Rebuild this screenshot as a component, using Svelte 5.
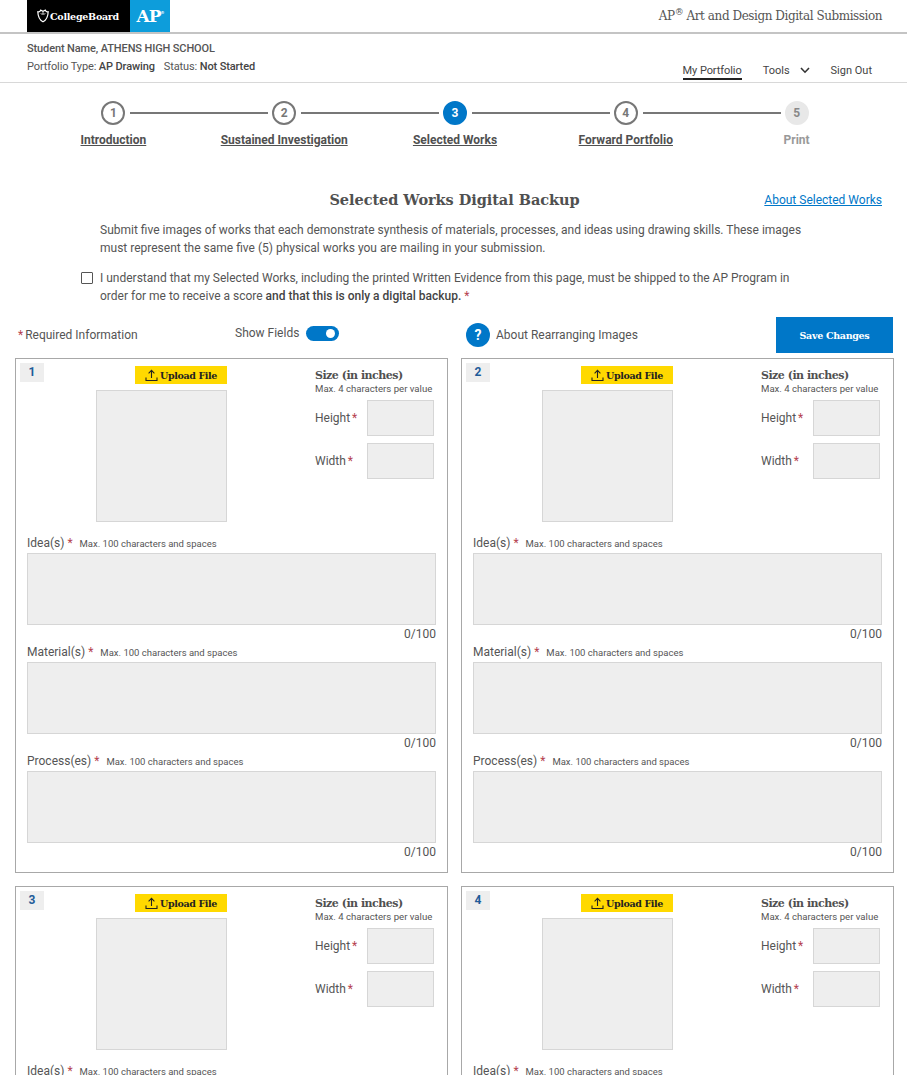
<script>
  const steps = [
    { n: 1, label: 'Introduction' },
    { n: 2, label: 'Sustained Investigation' },
    { n: 3, label: 'Selected Works', active: true },
    { n: 4, label: 'Forward Portfolio' },
    { n: 5, label: 'Print', off: true }
  ];
  const fields = ['Idea(s)', 'Material(s)', 'Process(es)'];
</script>

<div class="page">
  <header class="top">
    <div class="logos">
      <div class="cb">
        <svg width="12" height="14" viewBox="0 0 15 17" aria-hidden="true"><path d="M1 3.2 C3 3.8 4 2.6 4.6 1.2 L7.5 2.6 L10.4 1.2 C11 2.6 12 3.8 14 3.2 C13.8 9 12 13.4 7.5 15.8 C3 13.4 1.2 9 1 3.2 Z" fill="none" stroke="#fff" stroke-width="1.5"/><path d="M7.5 3 L7.5 6 M4.5 5.5 C6 6.5 9 6.5 10.5 5.5" stroke="#fff" fill="none" stroke-width="1"/></svg>
        <span>CollegeBoard</span>
      </div>
      <div class="ap">AP<sup>®</sup></div>
    </div>
    <div class="apptitle">AP<sup>®</sup> Art and Design Digital Submission</div>
  </header>

  <section class="info">
    <div class="student">
      <div class="name">Student Name, ATHENS HIGH SCHOOL</div>
      <div class="meta">Portfolio Type: <b>AP Drawing</b><span class="status">Status: <b>Not Started</b></span></div>
    </div>
    <nav class="nav">
      <span class="current">My Portfolio</span>
      <span class="tools">Tools
        <svg width="10" height="7" viewBox="0 0 10 7" aria-hidden="true"><path d="M1 1 L5 5.2 L9 1" fill="none" stroke="#333" stroke-width="1.6"/></svg>
      </span>
      <span>Sign Out</span>
    </nav>
  </section>

  <ol class="stepper">
    {#each steps as s, i}
      <li class="step" class:active={s.active} class:off={s.off} class:joined={i < steps.length - 1}>
        <span class="dot">{s.n}</span>
        <span class="lbl">{s.label}</span>
      </li>
    {/each}
  </ol>

  <div class="headrow">
    <h1>Selected Works Digital Backup</h1>
    <a class="about" href="#about">About Selected Works</a>
  </div>

  <p class="intro">Submit five images of works that each demonstrate synthesis of materials, processes, and ideas using drawing skills. These images must represent the same five (5) physical works you are mailing in your submission.</p>

  <div class="agree">
    <span class="check"></span>
    <p>I understand that my Selected Works, including the printed Written Evidence from this page, must be shipped to the AP Program in order for me to receive a score <b>and that this is only a digital backup.</b> <i>*</i></p>
  </div>

  <div class="toolbar">
    <div class="req"><i>*</i>Required Information</div>
    <div class="show">Show Fields <span class="toggle"></span></div>
    <div class="rearr"><span class="q">?</span>About Rearranging Images</div>
    <button class="save">Save Changes</button>
  </div>

  <div class="cards">
    {#each [1, 2, 3, 4] as n}
      <article class="card">
        <div class="upper">
          <span class="badge">{n}</span>
          <div class="media">
            <button class="upload">
              <svg width="13" height="13" viewBox="0 0 13 13" aria-hidden="true"><path d="M6.5 9 V1.6 M3.6 4.3 L6.5 1.4 L9.4 4.3 M1 8.5 V11.5 H12 V8.5" fill="none" stroke="#222" stroke-width="1.1"/></svg>
              Upload File
            </button>
            <div class="image"></div>
          </div>
          <div class="size">
            <h2>Size (in inches)</h2>
            <div class="hint">Max. 4 characters per value</div>
            <label class="dim"><span>Height <i>*</i></span><input aria-label="Height" /></label>
            <label class="dim"><span>Width <i>*</i></span><input aria-label="Width" /></label>
          </div>
        </div>
        {#each fields as f}
          <div class="field">
            <div class="flabel"><span>{f} <i>*</i></span><small>Max. 100 characters and spaces</small></div>
            <textarea aria-label={f}></textarea>
            <div class="count">0/100</div>
          </div>
        {/each}
      </article>
    {/each}
  </div>
</div>

<style>
  :global(body) { margin: 0; background: #fff; }
  .page { height: 1075px; overflow: hidden; font-family: Roboto, "Liberation Sans", sans-serif; color: #555; font-size: 12px; }
  i { font-style: normal; color: #b5424f; }

  .top { height: 32px; display: flex; justify-content: space-between; align-items: center; border-bottom: 2px solid #c4c4c4; padding: 0 25px 0 27px; }
  .logos { display: flex; height: 32px; }
  .cb { width: 103px; background: #000; color: #fff; display: flex; align-items: center; gap: 1px; padding-left: 10px; box-sizing: border-box; font: 700 9.5px "DejaVu Serif", serif; letter-spacing: -0.25px; }
  .ap { width: 40px; background: #0d9ddb; color: #fff; font: 700 17px "DejaVu Serif", serif; display: flex; align-items: center; justify-content: center; letter-spacing: -1px; }
  .ap sup { font-size: 4px; margin-bottom: 8px; }
  .apptitle { font: 400 12px "DejaVu Serif", serif; color: #555; letter-spacing: -0.44px; }
  .apptitle sup { font-size: 9px; line-height: 0; }

  .info { height: 48px; display: flex; justify-content: space-between; border-bottom: 1px solid #d8d8d8; padding: 0 35px 0 27px; }
  .student { padding-top: 6px; font-size: 11px; line-height: 18px; letter-spacing: -0.12px; }
  .name { font-weight: 500; }
  .meta b { font-weight: 500; color: #444; }
  .status { margin-left: 9px; }
  .nav { display: flex; gap: 23px; align-items: flex-end; font-size: 11px; padding-bottom: 2px; color: #444; }
  .nav span { line-height: 15px; padding-bottom: 0; }
  .nav .current { border-bottom: 2px solid #222; letter-spacing: -0.08px; margin-right: -2px; padding-bottom: 0; }
  .tools { display: inline-flex; align-items: center; gap: 10px; margin-right: -2px; }
  .nav > span:not(.current) { margin-bottom: 2px; }

  .stepper { list-style: none; margin: 0 0 0 28px; padding: 18px 0 0; display: grid; grid-template-columns: repeat(5, 170.8px); }
  .step { position: relative; display: flex; flex-direction: column; align-items: center; gap: 7px; }
  .joined::after { content: ""; position: absolute; left: calc(50% + 17px); top: 11px; width: 138px; height: 2px; background: #777; }
  .dot { width: 24px; height: 24px; box-sizing: border-box; border: 2px solid #777; border-radius: 50%; display: flex; align-items: center; justify-content: center; font-size: 12px; font-weight: 700; color: #777; }
  .lbl { font-size: 12px; font-weight: 700; text-decoration: underline; color: #505050; line-height: 16px; }
  .active .dot { background: #0077c8; border-color: #0077c8; color: #fff; }
  .off .dot { background: #e8e8e8; border-color: #e8e8e8; color: #888; }
  .off .lbl { text-decoration: none; color: #999; }

  .headrow { position: relative; margin-top: 42px; height: 20px; text-align: center; }
  h1 { margin: 0; padding-left: 2px; font: 700 14.5px/20px "DejaVu Serif", serif; color: #505050; letter-spacing: -0.05px; }
  .about { position: absolute; right: 25px; top: 2px; font-size: 12px; color: #0077c8; line-height: 16px; }

  .intro { margin: 11px 0 0 100px; width: 715px; font-size: 12px; line-height: 18px; }
  .agree { display: flex; margin: 12px 0 0 81px; width: 720px; gap: 7px; }
  .check { flex: none; width: 12px; height: 12px; border: 1.5px solid #555; border-radius: 1px; margin-top: 3px; box-sizing: border-box; }
  .agree p { margin: 0; font-size: 12px; line-height: 18px; }
  .agree b { font-weight: 500; color: #444; }

  .toolbar { display: grid; grid-template-columns: 217px 231px 310px 117px; margin: 12px 0 0 18px; height: 36px; align-items: center; font-size: 12px; }
  .req i { margin-right: 2px; }
  .show { display: flex; align-items: center; gap: 7px; margin-top: -4px; }
  .toggle { width: 33px; height: 15px; background: #0077c8; border-radius: 8px; position: relative; }
  .toggle::after { content: ""; position: absolute; right: 4px; top: 3px; width: 9px; height: 9px; border-radius: 50%; background: #fff; }
  .rearr { display: flex; align-items: center; gap: 6px; }
  .q { width: 24px; height: 24px; border-radius: 50%; background: #0077c8; color: #fff; font-weight: 700; font-size: 14px; display: flex; align-items: center; justify-content: center; }
  .save { height: 36px; border: 0; padding: 0; background: #0077c8; color: #fff; font: 700 9.5px "DejaVu Serif", serif; letter-spacing: -0.3px; }

  .cards { display: grid; grid-template-columns: 433px 433px; gap: 13px; margin: 5px 0 0 15px; }
  .card { box-sizing: border-box; height: 515px; border: 1px solid #a8a8a8; }
  .upper { display: flex; padding: 4px 0 0 4px; height: 174px; box-sizing: border-box; }
  .badge { flex: none; width: 24px; height: 19px; box-sizing: border-box; padding-bottom: 2px; background: #eee; color: #1f5c99; font-weight: 700; font-size: 12px; display: flex; align-items: center; justify-content: center; }
  .media { flex: none; width: 131px; margin-left: 52px; display: flex; flex-direction: column; align-items: flex-end; }
  .upload { width: 92px; height: 18px; margin-top: 3px; border: 0; padding: 0; background: #ffd900; color: #222; font: 700 9.5px "DejaVu Serif", serif; letter-spacing: -0.38px; display: flex; align-items: center; justify-content: center; gap: 2px; }
  .image { width: 131px; height: 132px; margin-top: 6px; box-sizing: border-box; background: #eee; border: 1px solid #d6d6d6; }
  .size { margin-left: 88px; width: 119px; }
  .size h2 { margin: 6px 0 0; font: 700 11px/14px "DejaVu Serif", serif; color: #505050; letter-spacing: -0.5px; }
  .hint { font-size: 9.6px; line-height: 12px; white-space: nowrap; }
  .dim { display: flex; justify-content: space-between; align-items: center; height: 36px; margin-top: 7px; font-size: 12px; }
  .dim:first-of-type { margin-top: 5px; }
  .dim i { margin-left: -1px; }
  .dim input { width: 67px; height: 36px; box-sizing: border-box; background: #eee; border: 1px solid #d6d6d6; }

  .field { padding: 0 11px; }
  .flabel { display: flex; align-items: center; gap: 7px; height: 19px; font-size: 12px; }
  .flabel small { font-size: 9.5px; padding-top: 1px; }
  textarea { display: block; width: 409px; height: 72px; box-sizing: border-box; margin: 1px 0 0; background: #eee; border: 1px solid #d6d6d6; resize: none; }
  .count { text-align: right; height: 17px; line-height: 19px; font-size: 12px; }
</style>
